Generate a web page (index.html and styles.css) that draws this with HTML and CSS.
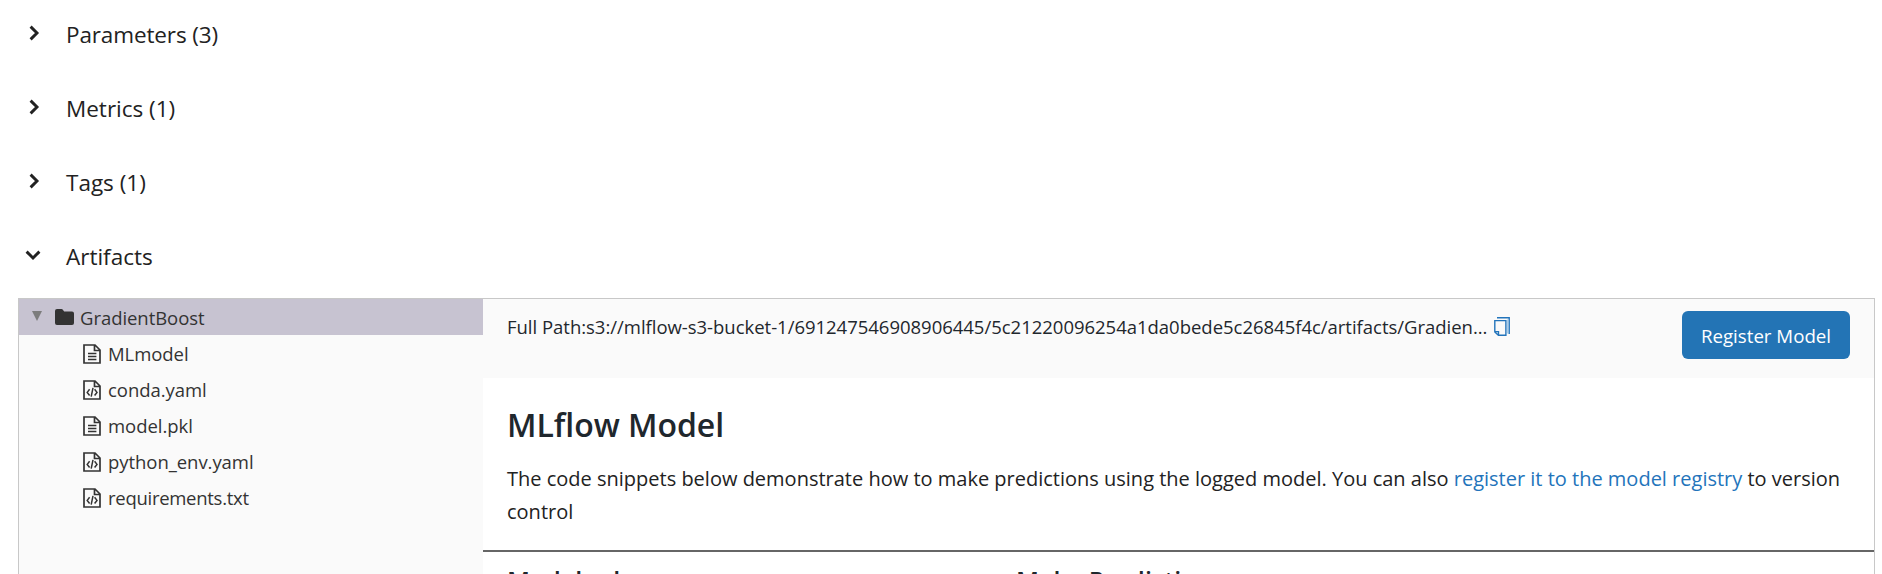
FILE: index.html
```
<!DOCTYPE html>
<html lang="en">
<head>
<meta charset="utf-8">
<title>MLflow Run</title>
<link rel="stylesheet" href="styles.css">
</head>
<body>
<svg class="defs" width="0" height="0">
  <symbol id="chevron" viewBox="0 0 16 16"><path d="M4.6 1.6 L11 8 L4.6 14.4" fill="none" stroke="#222" stroke-width="2.9"/></symbol>
  <symbol id="file-text" viewBox="0 0 18 20">
    <path d="M1 1H12L17 6V19H1Z M11.5 1V6.5H17" fill="none" stroke="#333" stroke-width="1.7"/>
    <path d="M5 9.5H13.4M5 12.5H13.4M5 15.5H13.4" fill="none" stroke="#333" stroke-width="1.6"/>
  </symbol>
  <symbol id="file-code" viewBox="0 0 18 20">
    <path d="M1 1H12L17 6V19H1Z M11.5 1V6.5H17" fill="none" stroke="#333" stroke-width="1.7"/>
    <path d="M6.6 9.3L4.2 12.4L6.6 15.5M11.6 9.3L14 12.4L11.6 15.5M10 7.8L8.2 16.6" fill="none" stroke="#333" stroke-width="1.5"/>
  </symbol>
</svg>
<div class="sections">
  <div class="section"><svg class="chevron"><use href="#chevron"/></svg><span class="tight">Parameters (3)</span></div>
  <div class="section"><svg class="chevron"><use href="#chevron"/></svg><span>Metrics (1)</span></div>
  <div class="section"><svg class="chevron"><use href="#chevron"/></svg><span>Tags (1)</span></div>
  <div class="section"><svg class="chevron open"><use href="#chevron"/></svg><span>Artifacts</span></div>
</div>
<div class="panel">
  <div class="tree">
    <div class="folder">
      <svg class="toggle" viewBox="0 0 10 10"><path d="M0 0H10L5 10Z" fill="#7d7d7d"/></svg>
      <svg class="folder-icon" viewBox="0 0 19 16"><path d="M2 0H6.5Q7.5 0 8 .9L9.2 2.5H17Q19 2.5 19 4.5V14Q19 16 17 16H2Q0 16 0 14V2Q0 0 2 0Z" fill="#333"/></svg>
      <span>GradientBoost</span>
    </div>
    <div class="file"><svg class="file-icon"><use href="#file-text"/></svg><span>MLmodel</span></div>
    <div class="file"><svg class="file-icon"><use href="#file-code"/></svg><span>conda.yaml</span></div>
    <div class="file"><svg class="file-icon"><use href="#file-text"/></svg><span>model.pkl</span></div>
    <div class="file"><svg class="file-icon"><use href="#file-code"/></svg><span>python_env.yaml</span></div>
    <div class="file"><svg class="file-icon"><use href="#file-code"/></svg><span class="narrow">requirements.txt</span></div>
  </div>
  <div class="detail">
    <div class="bar">
      <div class="path"><span>Full Path:s3://mlflow-s3-bucket-1/691247546908906445/5c21220096254a1da0bede5c26845f4c/artifacts/Gradien...</span>
        <svg class="copy" viewBox="0 0 16 19"><path d="M3 .8H15.2V17" fill="none" stroke="#2374bb" stroke-width="1.4"/><path d="M13.5 2.5V16.5" stroke="#a9cdea" stroke-width="1"/><path d="M.8 3.6H11.9V18.2H4.4L.8 14.9Z M.8 14.6H4.5V18.2" fill="none" stroke="#2374bb" stroke-width="1.4"/></svg>
      </div>
      <button class="register">Register Model</button>
    </div>
    <div class="intro">
      <h2>MLflow Model</h2>
      <p>The code snippets below demonstrate how to make predictions using the logged model. You can also <a>register it to the model registry</a> to version control</p>
    </div>
    <div class="columns"><h3>Model schema</h3><h3>Make Predictions</h3></div>
  </div>
</div>
</body>
</html>
```
FILE: styles.css
```
* { box-sizing: border-box; }
body {
  margin: 0;
  height: 574px;
  display: flex;
  flex-direction: column;
  overflow: hidden;
  background: #fff;
  color: #1f272d;
  font-family: "Open Sans", "Noto Sans", sans-serif;
}
svg { display: block; flex: none; }
.defs { position: absolute; }
.sections { padding: 18px 0 26px 26px; display: flex; flex-direction: column; gap: 42px; }
.section { display: flex; height: 32px; gap: 24px; color: #222; font-size: 22.5px; line-height: 34px; }
.tight { letter-spacing: -.13px; }
.chevron { width: 16px; height: 16px; margin-top: 7px; }
.chevron.open { transform: rotate(90deg); margin-left: -1px; margin-right: 1px; }
.panel { flex: none; width: 1857px; height: 276px; margin-left: 18px; display: flex; overflow: hidden; border: 1px solid #c8c8c8; border-bottom: 0; background: #fafafa; }
.tree { width: 464px; color: #333; font-size: 18.5px; line-height: 38px; letter-spacing: -.05px; }
.narrow { letter-spacing: -.28px; }
.folder { display: flex; height: 36px; padding-left: 13px; background: #c7c3d1; }
.toggle { width: 10px; height: 10px; margin: 12px 13px 0 0; }
.folder-icon { width: 19px; height: 16px; margin: 10px 6px 0 0; }
.file { display: flex; height: 36px; padding-left: 64px; }
.file-icon { width: 18px; height: 20px; margin: 9px 7px 0 0; }
.detail { flex: 1; background: #fff; }
.bar { height: 79px; padding: 12px 24px 0 24px; display: flex; justify-content: space-between; background: #fafafa; }
.path { display: flex; height: 32px; font-size: 18.5px; line-height: 32px; letter-spacing: -.02px; gap: 7px; }
.copy { width: 16px; height: 19px; margin-top: 6px; }
.register { width: 168px; height: 48px; padding: 2px 0 0; border: 0; border-radius: 6px; background: #2374b5; color: #fff; font: 18.7px/46px "Open Sans", sans-serif; }
.intro { padding: 27px 20px 22px 24px; }
h2 { margin: 0 0 17px; font-size: 32px; font-weight: 600; line-height: 40px; letter-spacing: -.05px; }
p { margin: 0; color: #222; font-size: 20px; line-height: 33px; }
a { color: #2374bb; }
.columns { display: grid; grid-template-columns: 509px 1fr; padding: 12px 23px 0 24px; border-top: 2px solid #666; }
h3 { margin: 0; font-size: 25px; font-weight: 600; line-height: 32px; }
```
